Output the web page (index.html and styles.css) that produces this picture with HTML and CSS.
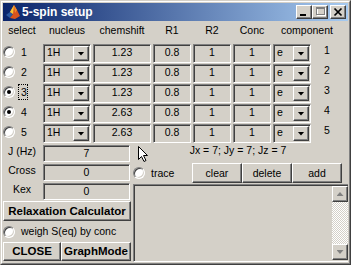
FILE: index.html
```html
<!DOCTYPE html>
<html>
<head>
<meta charset="utf-8">
<title>5-spin setup</title>
<link rel="stylesheet" href="styles.css">
</head>
<body>
<div class="window">
  <div class="frame">
    <div class="titlebar">
      <svg class="appicon" viewBox="0 0 16 16" width="16" height="16">
        <path d="M1 11 L5 8 L8 10 L5 14 Z" fill="#2c5aa0"/>
        <path d="M5 8 L9 1 L12 6 L15 12 L10 15 L5 14 L8 10 Z" fill="#d9541e"/>
        <path d="M9 1 L8 10 L5 8 Z" fill="#f6c437"/>
        <path d="M9 1 L12 6 L10 9 Z" fill="#f08a2a"/>
      </svg>
      <span class="title">5-spin setup</span>
      <div class="tbtns">
        <span class="tbtn"><svg viewBox="0 0 14 12" width="14" height="12"><rect x="3" y="8" width="6" height="2" fill="#000"/></svg></span>
        <span class="tbtn"><svg viewBox="0 0 14 12" width="14" height="12"><rect x="4.5" y="2.5" width="8" height="7" fill="none" stroke="#fff"/><rect x="3.5" y="1.5" width="8" height="7" fill="none" stroke="#808080"/><rect x="3" y="1" width="9" height="2" fill="#808080"/></svg></span>
        <span class="tbtn tclose"><svg viewBox="0 0 14 12" width="14" height="12"><path d="M3.5 2.5 L10.5 9.5 M10.5 2.5 L3.5 9.5" stroke="#000" stroke-width="1.7" fill="none"/></svg></span>
      </div>
    </div>
    <div class="client">
      <div class="table">
        <div class="hd">select</div>
        <div class="hd">nucleus</div>
        <div class="hd">chemshift</div>
        <div class="hd">R1</div>
        <div class="hd">R2</div>
        <div class="hd">Conc</div>
        <div class="hd span2">component</div>

        <div class="sel"><span class="radio"></span><span class="num">1</span></div>
        <div class="popup"><span class="ptext">1H</span><span class="drop"></span></div>
        <div class="edit">1.23</div>
        <div class="edit">0.8</div>
        <div class="edit">1</div>
        <div class="edit">1</div>
        <div class="popup"><span class="ptext">e</span><span class="drop"></span></div>
        <div class="rowno">1</div>

        <div class="sel"><span class="radio"></span><span class="num">2</span></div>
        <div class="popup"><span class="ptext">1H</span><span class="drop"></span></div>
        <div class="edit">1.23</div>
        <div class="edit">0.8</div>
        <div class="edit">1</div>
        <div class="edit">1</div>
        <div class="popup"><span class="ptext">e</span><span class="drop"></span></div>
        <div class="rowno">2</div>

        <div class="sel"><span class="radio on"></span><span class="num focus">3</span></div>
        <div class="popup"><span class="ptext">1H</span><span class="drop"></span></div>
        <div class="edit">1.23</div>
        <div class="edit">0.8</div>
        <div class="edit">1</div>
        <div class="edit">1</div>
        <div class="popup"><span class="ptext">e</span><span class="drop"></span></div>
        <div class="rowno">3</div>

        <div class="sel"><span class="radio on"></span><span class="num">4</span></div>
        <div class="popup"><span class="ptext">1H</span><span class="drop"></span></div>
        <div class="edit">2.63</div>
        <div class="edit">0.8</div>
        <div class="edit">1</div>
        <div class="edit">1</div>
        <div class="popup"><span class="ptext">e</span><span class="drop"></span></div>
        <div class="rowno">4</div>

        <div class="sel"><span class="radio"></span><span class="num">5</span></div>
        <div class="popup"><span class="ptext">1H</span><span class="drop"></span></div>
        <div class="edit">2.63</div>
        <div class="edit">0.8</div>
        <div class="edit">1</div>
        <div class="edit">1</div>
        <div class="popup"><span class="ptext">e</span><span class="drop"></span></div>
        <div class="rowno">5</div>
      </div>

      <div class="lower">
        <div class="left">
          <div class="params">
            <div class="plabel">J (Hz)</div><div class="edit small">7</div>
            <div class="plabel">Cross</div><div class="edit small">0</div>
            <div class="plabel">Kex</div><div class="edit small">0</div>
          </div>
          <button class="btn bold wide">Relaxation Calculator</button>
          <div class="opt"><span class="radio"></span><span>weigh S(eq) by conc</span></div>
          <div class="btnrow">
            <button class="btn bold bclose">CLOSE</button>
            <button class="btn bold bgraph">GraphMode</button>
          </div>
        </div>
        <div class="right">
          <div class="jinfo">Jx = 7; Jy = 7; Jz = 7</div>
          <div class="actions">
            <span class="radio"></span><span class="trace">trace</span>
            <button class="btn act first">clear</button>
            <button class="btn act">delete</button>
            <button class="btn act last">add</button>
          </div>
          <div class="listbox">
            <div class="lbody"></div>
            <div class="vscroll">
              <span class="sbtn"><span class="arr up"></span></span>
              <span class="track"></span>
              <span class="sbtn"><span class="arr down"></span></span>
            </div>
          </div>
        </div>
      </div>
    </div>
  </div>
  <svg class="cursor" viewBox="0 0 12 17" width="12" height="17">
    <path d="M0.5 0.5 L0.5 13.5 L3.5 10.5 L6 15.5 L8 14.5 L5.5 9.5 L9.5 9.5 Z" fill="#fff" stroke="#000" stroke-width="1" stroke-linejoin="miter"/>
  </svg>
</div>
</body>
</html>
```

FILE: styles.css
```css
* { box-sizing: border-box; margin: 0; padding: 0; }
html, body { width: 351px; height: 265px; overflow: hidden; background: #d4d0c8; }
body {
  font-family: "Liberation Sans", Arial, sans-serif;
  font-size: 10.5px;
  line-height: 13px;
  color: #000;
}
.window {
  position: relative;
  width: 351px;
  height: 265px;
  border: 1px solid;
  border-color: #d4d0c8 #404040 #404040 #d4d0c8;
  background: #d4d0c8;
}
.frame {
  height: 100%;
  border: 1px solid;
  border-color: #fff #808080 #808080 #fff;
  padding: 1px;
  display: flex;
  flex-direction: column;
}
.titlebar {
  height: 18px;
  flex: none;
  display: flex;
  align-items: center;
  padding-left: 2px;
  background: linear-gradient(to right, #0a246a, #a6caf0);
  color: #fff;
}
.appicon { flex: none; }
.title { font-weight: bold; font-size: 12px; margin-left: 1px; }
.tbtns { margin-left: auto; margin-right: 2px; display: flex; }
.tbtn {
  width: 16px;
  height: 14px;
  background: #d4d0c8;
  border: 1px solid;
  border-color: #fff #404040 #404040 #fff;
  box-shadow: inset -1px -1px #808080;
  display: block;
}
.tbtn svg { display: block; }
.tclose { margin-left: 2px; }

.client {
  flex: 1;
  overflow: hidden;
  display: flex;
  flex-direction: column;
}

/* sunken / raised */
.edit, .popup, .listbox {
  border: 1px solid;
  border-color: #808080 #fff #fff #808080;
  box-shadow: inset 1px 1px #404040, inset -1px -1px #d4d0c8;
  padding: 1px;
  background: #d4d0c8;
}
.btn, .drop, .sbtn {
  background: #d4d0c8;
  border: 1px solid;
  border-color: #fff #404040 #404040 #fff;
  box-shadow: inset -1px -1px #808080;
}

.table {
  display: grid;
  grid-template-columns: 38px 48px 58px 38px 38px 38px 38px 28px;
  grid-template-rows: 22px repeat(5, 19px);
  column-gap: 2px;
  row-gap: 1px;
}
.hd { text-align: center; padding-top: 3px; white-space: nowrap; }
.span2 { grid-column: span 2; }
.sel { display: flex; align-items: flex-start; padding-top: 2px; gap: 6px; }
.num { display: block; }
.num.focus {
  margin: -2px 0 0 -3px;
  padding: 2px 1px 1px 3px;
  outline: 1px dotted #000;
  outline-offset: -1px;
}
.edit { text-align: center; overflow: hidden; white-space: nowrap; }
.popup { display: flex; }
.ptext { flex: 1; padding-left: 2px; }
.drop {
  width: 16px;
  flex: none;
  display: flex;
  align-items: center;
  justify-content: center;
}
.drop::after {
  content: "";
  width: 7px;
  height: 4px;
  background: #000;
  clip-path: polygon(0 0, 100% 0, 50% 100%);
}
.rowno { text-align: center; }

.radio {
  width: 12px;
  height: 12px;
  flex: none;
  position: relative;
  border-radius: 50%;
  background: #fff;
  border: 1px solid;
  border-color: #808080 #fff #fff #808080;
  box-shadow: inset 1px 1px #404040, inset -1px -1px #d4d0c8;
}
.radio.on::after {
  content: "";
  position: absolute;
  left: 3px;
  top: 3px;
  width: 4px;
  height: 4px;
  border-radius: 50%;
  background: #000;
}

.lower { display: flex; flex: 1; margin-top: 1px; min-height: 0; }
.left { width: 128px; flex: none; display: flex; flex-direction: column; }
.params {
  display: grid;
  grid-template-columns: 38px 87px;
  grid-auto-rows: 17px;
  column-gap: 2px;
  row-gap: 2px;
  margin-top: 1px;
}
.plabel { text-align: center; white-space: nowrap; }
.btn { font: inherit; color: #000; padding: 0; }
.bold { font-weight: bold; font-size: 11.5px; white-space: nowrap; }
.wide { margin-top: 1px; height: 20px; width: 128px; }
.opt { height: 21px; display: flex; align-items: center; gap: 6px; }
.btnrow { display: flex; height: 19px; }
.bclose { width: 58px; }
.bgraph { width: 70px; }

.right { flex: 1; min-width: 0; margin-left: 1px; display: flex; flex-direction: column; }
.jinfo { height: 19px; text-align: center; padding-right: 4px; white-space: nowrap; }
.actions { height: 20px; flex: none; display: flex; align-items: center; }
.actions .radio { margin-left: 1px; }
.trace { margin-left: 6px; }
.act { width: 50px; height: 20px; }
.act.first { margin-left: auto; }
.act.last { margin-right: 6px; }

.listbox {
  width: 217px;
  flex: 1;
  margin-top: 1px;
  margin-left: 1px;
  display: flex;
}
.lbody { flex: 1; }
.vscroll { width: 16px; flex: none; display: flex; flex-direction: column; }
.sbtn {
  width: 16px;
  height: 16px;
  flex: none;
  display: flex;
  align-items: center;
  justify-content: center;
}
.track {
  flex: 1;
  background: repeating-conic-gradient(#fff 0 25%, #d4d0c8 0 50%) 0 0 / 2px 2px;
}
.arr { width: 7px; height: 4px; background: #808080; }
.arr.up { clip-path: polygon(50% 0, 100% 100%, 0 100%); }
.arr.down { clip-path: polygon(0 0, 100% 0, 50% 100%); }

.cursor { position: absolute; left: 137px; top: 145px; }
```
